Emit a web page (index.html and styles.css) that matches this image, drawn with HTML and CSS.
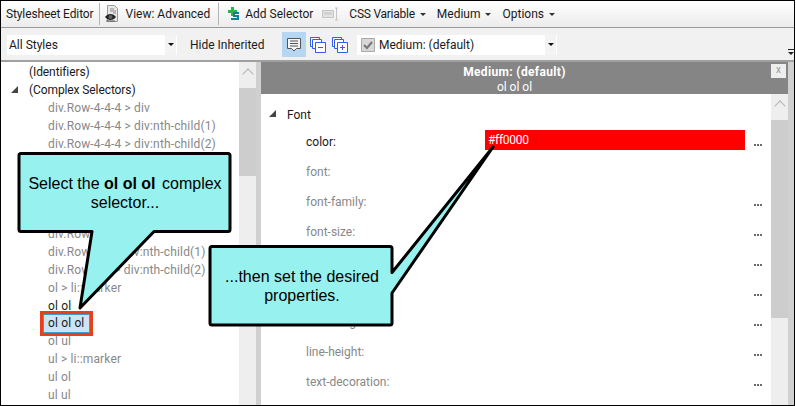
FILE: index.html
```html
<!DOCTYPE html>
<html lang="en">
<head>
  <meta charset="UTF-8">
  <meta name="viewport" content="width=device-width, initial-scale=1.0">
  <title>Stylesheet Editor</title>
  <link rel="stylesheet" href="styles.css">
</head>
<body>
  <div class="window">
    <div class="toolbar">
      <span class="tool title">Stylesheet Editor</span>
      <span class="sep sep-a"></span>
      <svg class="icon icon-view" width="14" height="18" viewBox="0 0 14 18">
        <path d="M2.5 .5h7l3 3v13h-10z" fill="#e8e8e8" stroke="#999"/>
        <path d="M5 4h4M5 6h6M8 8h3" stroke="#888"/>
        <path d="M0 12c3-4 8-4 11 0c-3 4-8 4-11 0z" fill="#222"/>
        <circle cx="5.5" cy="12" r="2" fill="#666"/>
        <path d="M1 16h9" stroke="#555"/>
      </svg>
      <span class="tool view">View: Advanced</span>
      <span class="sep sep-b"></span>
      <svg class="icon icon-add" width="13" height="14" viewBox="0 0 13 14">
        <path d="M4 0h3v3h3v3H7v3H4V6H1V3h3z" fill="#2eb24a"/>
        <path d="M6 5h6v2H8v1h4v5H4v-2h6v-1H6z" fill="#0f7f96"/>
      </svg>
      <span class="tool add">Add Selector</span>
      <svg class="icon icon-var" width="17" height="14" viewBox="0 0 17 14">
        <path d="M.5 3.5h11v7H.5z" fill="#e4e4e4" stroke="#c4c4c4"/>
        <path d="M2 5h8v3H2z" fill="#d2d2d2"/>
        <path d="M13 1h3M14.5 1v12M13 13h3" stroke="#c4c4c4" fill="none"/>
      </svg>
      <span class="tool menu css-var">CSS Variable</span>
      <span class="tool menu medium">Medium</span>
      <span class="tool menu options">Options</span>
    </div>

    <div class="filterbar">
      <div class="combo combo-styles">
        <span>All Styles</span>
        <span class="combo-btn"></span>
      </div>
      <span class="hide-inherited">Hide Inherited</span>
      <span class="icon-btn">
        <svg width="16" height="15" viewBox="0 0 16 15">
          <path d="M1.500 1.500h13v10h-4l-2.500 2.500l-2.500-2.500h-4z" fill="#f4f4f4" stroke="#555"/>
          <path d="M4 4h8M4 6.500h8M4 9h8" stroke="#555"/>
        </svg>
      </span>
      <svg class="stack stack-minus" width="16" height="16" viewBox="0 0 16 16">
        <g fill="#fff" stroke="#2f5fe8">
          <path d="M.5 .5h9v9h-9z"/>
          <path d="M2.500 2.500h9v9h-9z"/>
          <path d="M5.500 5.500h10v10h-10z"/>
        </g>
        <path d="M8 10.500h5" stroke="#2f5fe8"/>
      </svg>
      <svg class="stack stack-plus" width="16" height="16" viewBox="0 0 16 16">
        <g fill="#fff" stroke="#2f5fe8">
          <path d="M.5 .5h9v9h-9z"/>
          <path d="M2.500 2.500h9v9h-9z"/>
          <path d="M5.500 5.500h10v10h-10z"/>
        </g>
        <path d="M8 10.500h5M10.500 8v5" stroke="#2f5fe8"/>
      </svg>
      <div class="combo combo-medium">
        <svg class="check" width="14" height="14" viewBox="0 0 14 14">
          <path d="M.5 .5h13v13H.5z" fill="#d8d8d8" stroke="#aaa"/>
          <path d="M3 7l3 3l5-6" fill="none" stroke="#777" stroke-width="2"/>
        </svg>
        <span>Medium: (default)</span>
        <span class="combo-btn"></span>
      </div>
      <span class="overflow"></span>
    </div>

    <div class="panes">
      <div class="tree">
        <div class="tree-list">
          <div class="node top dark">(Identifiers)</div>
          <div class="node top dark open">(Complex Selectors)</div>
          <div class="node">div.Row-4-4-4 &gt; div</div>
          <div class="node">div.Row-4-4-4 &gt; div:nth-child(1)</div>
          <div class="node">div.Row-4-4-4 &gt; div:nth-child(2)</div>
          <div class="node"></div>
          <div class="node"></div>
          <div class="node"></div>
          <div class="node"></div>
          <div class="node">div.Row</div>
          <div class="node">div.Row-6-6 &gt; div:nth-child(1)</div>
          <div class="node">div.Row-6-6 &gt; div:nth-child(2)</div>
          <div class="node">ol &gt; li::marker</div>
          <div class="node dark">ol ol</div>
          <div class="node selected"><span class="sel-box">ol ol ol</span></div>
          <div class="node">ol ul</div>
          <div class="node">ul &gt; li::marker</div>
          <div class="node">ul ol</div>
          <div class="node">ul ul</div>
        </div>
        <div class="scrollbar scrollbar-left">
          <span class="arrow-up"></span>
          <span class="thumb"></span>
        </div>
      </div>
      <div class="splitter"></div>
      <div class="props">
        <div class="props-head">
          <strong>Medium: (default)</strong>
          <span>ol ol ol</span>
          <span class="close">x</span>
        </div>
        <div class="props-body">
          <div class="props-list">
            <div class="group">Font</div>
            <div class="prop dark"><span class="prop-name">color:</span><span class="prop-value">#ff0000</span><span class="dots"></span></div>
            <div class="prop"><span class="prop-name">font:</span></div>
            <div class="prop"><span class="prop-name">font-family:</span><span class="dots"></span></div>
            <div class="prop"><span class="prop-name">font-size:</span><span class="dots"></span></div>
            <div class="prop"><span class="dots"></span></div>
            <div class="prop"><span class="dots"></span></div>
            <div class="prop"><span class="prop-name">font-weight:</span><span class="dots"></span></div>
            <div class="prop"><span class="prop-name">line-height:</span><span class="dots"></span></div>
            <div class="prop"><span class="prop-name">text-decoration:</span><span class="dots"></span></div>
          </div>
          <div class="scrollbar scrollbar-right">
            <span class="arrow-up"></span>
            <span class="thumb"></span>
          </div>
        </div>
      </div>
    </div>

    <!-- annotations on top of the screenshot -->
    <svg class="callout-shapes" width="796" height="406" viewBox="0 0 796 406">
      <path d="M21 153.500h207a2 2 0 0 1 2 2v74a2 2 0 0 1-2 2H154L80 308L92 231.500H21a2 2 0 0 1-2-2v-74a2 2 0 0 1 2-2z"/>
      <path d="M212 246.500h178a2 2 0 0 1 2 2v24L493 147L392 293v30a2 2 0 0 1-2 2H212a2 2 0 0 1-2-2v-74.500a2 2 0 0 1 2-2z"/>
    </svg>
    <div class="callout callout-select"><span>Select the <b>ol ol ol</b> complex selector...</span></div>
    <div class="callout callout-props"><span>...then set the desired properties.</span></div>
  </div>
</body>
</html>
```

FILE: styles.css
```css
* {
  box-sizing: border-box;
}
body {
  margin: 0;
  background: #fff;
}
.window {
  position: relative;
  width: 795px;
  height: 406px;
  display: flex;
  flex-direction: column;
  overflow: hidden;
  border: 1px solid #000;
  font-family: Roboto, "Open Sans", sans-serif;
  font-size: 12px;
  color: #1a1a1a;
  background: #fff;
}

/* top toolbar */
.toolbar {
  height: 27px;
  flex: none;
  display: flex;
  align-items: center;
  white-space: nowrap;
  background: linear-gradient(to bottom, #fff, #ececec);
  border-bottom: 1px solid #9a9a9a;
}
.title {
  margin-left: 5px;
  letter-spacing: -.12px;
}
.sep {
  width: 1px;
  height: 22px;
  background: #b4b4b4;
}
.sep-a {
  margin-left: 5px;
}
.icon-view {
  margin-left: 5px;
}
.view {
  margin-left: 7px;
}
.sep-b {
  margin-left: 8px;
}
.icon-add {
  margin-left: 8px;
}
.add {
  margin-left: 5px;
}
.icon-var {
  margin-left: 9px;
}
.css-var {
  margin-left: 10px;
  letter-spacing: -.25px;
}
.medium {
  margin-left: 11px;
}
.options {
  margin-left: 11px;
}
.menu::after {
  content: "";
  display: inline-block;
  margin-left: 5px;
  vertical-align: 2px;
  border: 3px solid transparent;
  border-top-color: #333;
  border-bottom: 0;
}

/* filter row */
.filterbar {
  height: 34px;
  flex: none;
  display: flex;
  align-items: center;
  padding-top: 1px;
  white-space: nowrap;
  background: #f1f1f1;
  border-bottom: 2px solid #a0a0a0;
}
.combo {
  height: 20px;
  flex: none;
  display: flex;
  align-items: center;
  background: #fff;
}
.combo-btn {
  width: 12px;
  height: 20px;
  margin-left: auto;
  background: #f3f3f3;
  border-right: 1px solid #fff;
  position: relative;
}
.combo-btn::after {
  content: "";
  position: absolute;
  left: 3px;
  top: 8px;
  border: 3px solid transparent;
  border-top-color: #111;
  border-bottom: 0;
}
.combo-styles {
  width: 170px;
  margin-left: 6px;
  padding-left: 2px;
}
.hide-inherited {
  width: 75px;
  flex: none;
  margin-left: 13px;
}
.icon-btn {
  width: 24px;
  height: 25px;
  flex: none;
  margin-left: 17px;
  display: flex;
  align-items: center;
  justify-content: center;
  background: #b6d7f4;
}
.stack {
  flex: none;
}
.stack-minus {
  margin-left: 4px;
}
.stack-plus {
  margin-left: 6px;
}
.combo-medium {
  width: 200px;
  margin-left: 9px;
  padding-left: 4px;
}
.check {
  margin-right: 4px;
}
.overflow {
  width: 7px;
  height: 6px;
  flex: none;
  margin: 14px 0 0 231px;
  border-top: 1px solid #222;
  position: relative;
}
.overflow::after {
  content: "";
  position: absolute;
  left: 0;
  top: 2px;
  border: 3.5px solid transparent;
  border-top-color: #222;
  border-bottom: 0;
}

/* left tree */
.panes {
  flex: 1;
  min-height: 0;
  display: flex;
  background: #fff;
}
.tree {
  width: 255px;
  flex: none;
  display: flex;
}
.tree-list {
  flex: 1;
  min-width: 0;
  padding-top: 1px;
  overflow: hidden;
}
.node {
  height: 18px;
  line-height: 18px;
  padding-left: 47px;
  white-space: nowrap;
  letter-spacing: .15px;
  color: #888;
}
.node.top {
  padding-left: 28px;
  position: relative;
  letter-spacing: -.1px;
}
.node.dark,
.prop.dark .prop-name {
  color: #1a1a1a;
}
.node.open::before,
.group::before {
  content: "";
  position: absolute;
  left: 10px;
  top: 5px;
  width: 7px;
  height: 7px;
  background: #444;
  clip-path: polygon(100% 0, 100% 100%, 0 100%);
}
.selected {
  position: relative;
  margin-bottom: -1px;
  color: #1a1a1a;
}
.sel-box {
  position: absolute;
  left: 42px;
  top: -1px;
  width: 47px;
  height: 19px;
  padding-left: 4px;
  line-height: 17px;
  background: #cbe5f5;
  border: 1px solid #3b9bd0;
  box-shadow: 0 0 0 3px #e8401a;
}

/* scrollbars */
.scrollbar {
  width: 17px;
  flex: none;
  display: flex;
  flex-direction: column;
  background: #eee;
}
.arrow-up {
  height: 26px;
  flex: none;
  position: relative;
}
.arrow-up::after {
  content: "";
  position: absolute;
  left: 5px;
  top: 8px;
  width: 7px;
  height: 7px;
  border-left: 1px solid #b4b4b4;
  border-top: 1px solid #b4b4b4;
  transform: rotate(45deg);
}
.thumb {
  background: #cdcdcd;
}
.scrollbar-left .thumb {
  height: 88px;
}
.scrollbar-right .thumb {
  height: 198px;
}
.splitter {
  width: 5px;
  flex: none;
  background: #d0d0d0;
}

/* right side */
.props {
  flex: 1;
  min-width: 0;
  display: flex;
  flex-direction: column;
  border-right: 6px solid #d0d0d0;
}
.props-head {
  height: 32px;
  flex: none;
  position: relative;
  display: flex;
  flex-direction: column;
  align-items: center;
  justify-content: center;
  padding: 3px 20px 0 0;
  line-height: 15px;
  color: #fff;
  background: #858585;
}
.props-head strong {
  letter-spacing: .35px;
}
.close {
  position: absolute;
  left: 510px;
  top: 2px;
  width: 15px;
  height: 14px;
  font-size: 10px;
  line-height: 12px;
  text-align: center;
  color: #999;
  background: #eee;
}
.props-body {
  flex: 1;
  min-height: 0;
  display: flex;
}
.props-list {
  flex: 1;
  min-width: 0;
  overflow: hidden;
  padding-top: 8px;
}
.group {
  height: 24px;
  line-height: 26px;
  padding-left: 26px;
  position: relative;
}
.group::before {
  left: 8px;
  top: 8px;
}
.prop {
  height: 30px;
  display: flex;
  align-items: center;
  padding: 2px 0 0 45px;
  position: relative;
  color: #888;
}
.prop-name {
  width: 179px;
  flex: none;
}
.prop-value {
  width: 260px;
  height: 20px;
  line-height: 20px;
  margin-top: -4px;
  padding-left: 3px;
  letter-spacing: -.3px;
  color: #fff;
  background: #f00;
}
.dots {
  position: absolute;
  left: 493px;
  top: 18px;
  width: 8px;
  height: 2px;
  background: repeating-linear-gradient(to right, #6b6b6b 0 2px, transparent 2px 3px);
}

/* callouts */
.callout-shapes {
  position: absolute;
  left: -1px;
  top: -1px;
  pointer-events: none;
}
.callout-shapes path {
  fill: #97f1ee;
  stroke: #000;
  stroke-width: 3;
  stroke-linejoin: round;
}
.callout {
  position: absolute;
  display: flex;
  align-items: center;
  justify-content: center;
  text-align: center;
  font-family: "Liberation Sans", Arial, sans-serif;
  font-size: 16px;
  line-height: 19px;
  color: #000;
}
.callout b {
  margin-right: 2px;
}
.callout-select {
  left: 26px;
  top: 153px;
  width: 196px;
  height: 77px;
}
.callout-props {
  left: 219px;
  top: 246px;
  width: 164px;
  height: 77px;
}
```
